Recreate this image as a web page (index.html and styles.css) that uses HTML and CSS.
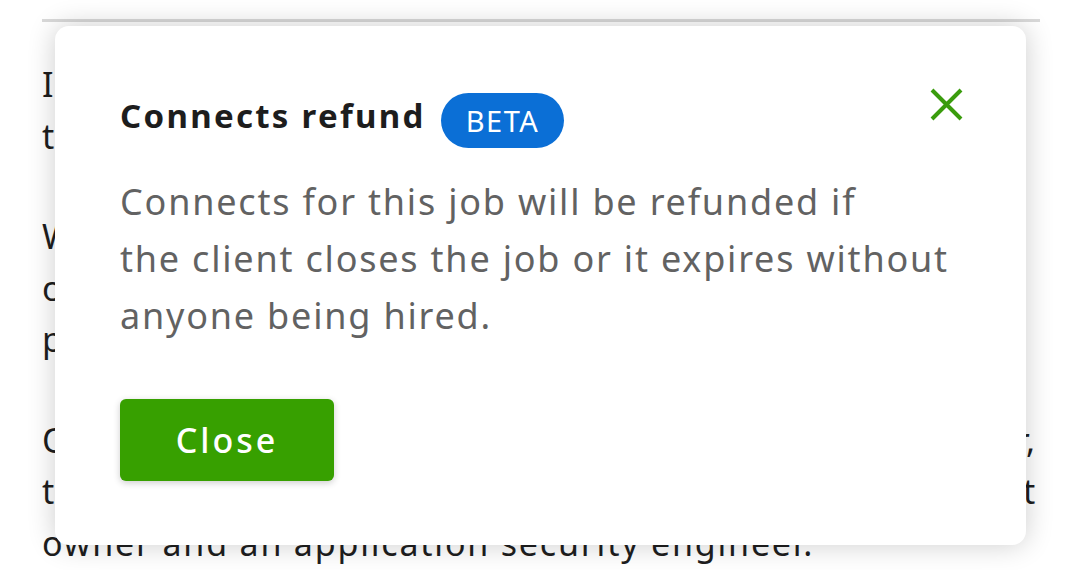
FILE: index.html
```html
<!DOCTYPE html>
<html>
    <head>
        <title>Connects refund</title>
        <link rel="stylesheet" href="styles.css">
    </head>
    <body>
        <div class="page">
            <div class="rule"></div>
            <article class="story">
                <p>
                    <span class="line">In our company we build tools for</span>
                    <span class="line">the team and our partners.</span>
                </p>
                <p>
                    <span class="line">We are looking for a developer to</span>
                    <span class="line">our product group and help</span>
                    <span class="line">projects on time.</span>
                </p>
                <p>
                    <span class="line full">Our team includes a project manager, a designer,</span>
                    <span class="line full">two developers, a tester, a scrum master, a content</span>
                    <span class="line">owner and an application security engineer.</span>
                </p>
            </article>
        </div>

        <div class="modal">
            <div class="modal-head">
                <h2 class="modal-title">Connects refund</h2>
                <span class="badge">BETA</span>
                <button type="button" class="modal-x" aria-label="Close">
                    <svg width="33" height="33" viewBox="0 0 33 33">
                        <path d="M2 2 L31 31 M31 2 L2 31" stroke="#3a9c0d" stroke-width="4" fill="none"/>
                    </svg>
                </button>
            </div>
            <p class="modal-text">Connects for this job will be refunded if<br>the client closes the job or it expires without<br>anyone being hired.</p>
            <button type="button" class="modal-close">Close</button>
        </div>
    </body>
</html>
```

FILE: styles.css
```css
body {
    font-family: "Noto Sans", Arial, sans-serif;
    background-color: #ffffff;
    margin: 0;
    padding: 0;
}

.page {
    padding: 19px 40px 0 42px;
}

.rule {
    border-top: 3px solid #d9d9d9;
}

.story {
    padding: 37px 3px 0 0;
    font-size: 34px;
    line-height: 51.5px;
    letter-spacing: 1.8px;
    color: #1e1e1e;
}

.story p {
    margin: 0 0 49px 0;
}

.story p:last-child {
    margin-bottom: 0;
}

.story .line {
    display: block;
    white-space: nowrap;
}

.story .full {
    text-align: justify;
    text-align-last: justify;
}

.modal {
    position: absolute;
    top: 26px;
    left: 55px;
    width: 971px;
    height: 519px;
    box-sizing: border-box;
    padding: 67px 63px 0 65px;
    background-color: #ffffff;
    border-radius: 14px;
    box-shadow: 0 0 28px rgba(0, 0, 0, 0.2);
}

.modal-head {
    display: flex;
    align-items: flex-start;
}

.modal-title {
    margin: 0 15px 0 0;
    font-size: 33px;
    line-height: 46px;
    font-weight: 700;
    letter-spacing: 2.3px;
    color: #1d1d1d;
}

.badge {
    height: 55px;
    padding: 0 25px 0 25px;
    border-radius: 28px;
    background-color: #0b6fd6;
    color: #ffffff;
    font-size: 29px;
    line-height: 55px;
    letter-spacing: 1.5px;
}

.modal-x {
    margin: -5px 0 0 auto;
    padding: 0;
    border: none;
    background: none;
    width: 33px;
    height: 33px;
    cursor: pointer;
}

.modal-x svg {
    display: block;
}

.modal-text {
    margin: 25px 0 0 0;
    font-size: 36px;
    line-height: 57px;
    letter-spacing: 1.8px;
    color: #626262;
}

.modal-close {
    margin-top: 55px;
    width: 214px;
    height: 82px;
    border: none;
    border-radius: 6px;
    background-color: #37a000;
    color: #ffffff;
    font-family: "Noto Sans", Arial, sans-serif;
    font-size: 34px;
    font-weight: 500;
    letter-spacing: 3px;
    box-shadow: 0 2px 7px rgba(0, 0, 0, 0.2);
    cursor: pointer;
}
```
